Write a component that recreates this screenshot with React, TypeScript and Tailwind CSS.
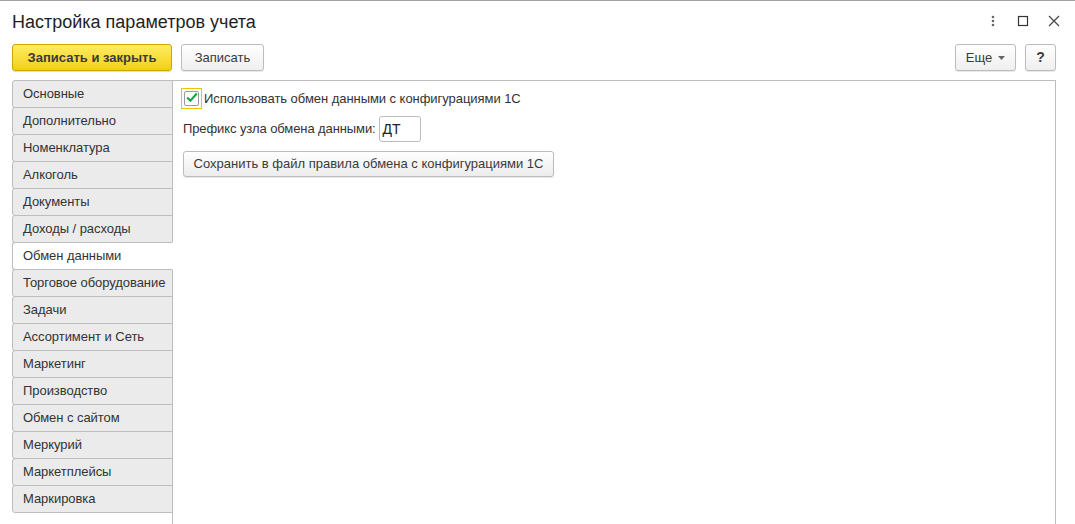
import React from 'react';

const tabs = [
  'Основные',
  'Дополнительно',
  'Номенклатура',
  'Алкоголь',
  'Документы',
  'Доходы / расходы',
  'Обмен данными',
  'Торговое оборудование',
  'Задачи',
  'Ассортимент и Сеть',
  'Маркетинг',
  'Производство',
  'Обмен с сайтом',
  'Меркурий',
  'Маркетплейсы',
  'Маркировка',
];

const active = 'Обмен данными';

const font = { fontFamily: '"Liberation Sans", Arial, sans-serif' };

const App: React.FC = () => {
  return (
    <div className="w-[1075px] h-[524px] bg-white border-t border-[#a3a3a3] overflow-hidden text-[13px] text-[#333]" style={font}>
      {/* window header */}
      <div className="flex items-center h-[39px] pl-3 pr-[14px]">
        <h1 className="text-[18px] text-[#1f1f1f] leading-none pt-[2px]">Настройка параметров учета</h1>
        <div className="ml-auto flex items-center gap-[18px] text-[#444]">
          <svg width="12" height="14" viewBox="0 0 12 14">
            <circle cx="6" cy="3" r="1.3" fill="#666" />
            <circle cx="6" cy="7" r="1.3" fill="#666" />
            <circle cx="6" cy="11" r="1.3" fill="#666" />
          </svg>
          <svg width="12" height="12" viewBox="0 0 12 12">
            <rect x="1.5" y="1.5" width="9" height="9" fill="none" stroke="#333" strokeWidth="1.2" />
          </svg>
          <svg width="14" height="14" viewBox="0 0 14 14">
            <path d="M2 2 L12 12 M12 2 L2 12" stroke="#444" strokeWidth="1.2" />
          </svg>
        </div>
      </div>

      {/* command bar */}
      <div className="flex items-center h-[27px] mt-[4px] pl-3 pr-[19px]">
        <button className="h-[27px] w-[160px] rounded-[3px] border border-[#c9ab00] bg-gradient-to-b from-[#ffec5c] to-[#f4d000] font-bold text-[13px] text-[#3a3a3a] shadow-[0_1px_1px_rgba(0,0,0,0.15)]">
          Записать и закрыть
        </button>
        <button className="ml-[9px] h-[27px] w-[83px] rounded-[3px] border border-[#bcbcbc] bg-gradient-to-b from-white to-[#efefef] text-[13px] text-[#3a3a3a] shadow-[0_1px_1px_rgba(0,0,0,0.1)]">
          Записать
        </button>
        <button className="ml-auto h-[27px] w-[61px] rounded-[3px] border border-[#bcbcbc] bg-gradient-to-b from-white to-[#efefef] text-[13px] text-[#3a3a3a] flex items-center justify-center gap-[6px] shadow-[0_1px_1px_rgba(0,0,0,0.1)]">
          Еще
          <svg width="7" height="4" viewBox="0 0 7 4"><path d="M0 0 H7 L3.5 4 Z" fill="#666" /></svg>
        </button>
        <button className="ml-[9px] h-[27px] w-[31px] rounded-[3px] border border-[#bcbcbc] bg-gradient-to-b from-white to-[#efefef] text-[14px] font-bold text-[#3a3a3a] shadow-[0_1px_1px_rgba(0,0,0,0.1)]">
          ?
        </button>
      </div>

      {/* tabs + page */}
      <div className="flex mt-[9px] pl-3 pr-[19px] h-[460px]">
        <div className="flex flex-col w-[161px] shrink-0">
          {tabs.map((t, i) => {
            const on = t === active;
            return (
              <div
                key={t}
                className={`relative h-[28px] flex items-center pl-[10px] border border-[#bdbdbd] rounded-l-[3px] ${i > 0 ? '-mt-px' : ''} ${
                  on ? 'bg-white border-r-white z-10' : 'bg-[#ebebeb]'
                } text-[13px] text-[#333] whitespace-nowrap tracking-[-0.05px]`}
              >
                {t}
              </div>
            );
          })}
        </div>

        <div className="-ml-px flex-1 border-l border-t border-r border-[#bdbdbd] h-[470px] pl-[8px] pt-[7px]">
          <div className="flex items-center">
            <div className="w-[21px] h-[21px] border border-[#f2c200] flex items-center justify-center">
              <div className="w-[15px] h-[15px] border border-[#9a9a9a] rounded-[2px] bg-white flex items-center justify-center">
                <svg width="15" height="13" viewBox="0 0 15 13" className="-mt-[2px] ml-[1px]">
                  <path d="M1.5 6.5 L5.5 10.5 L13.5 1.5" fill="none" stroke="#19a14a" strokeWidth="2.6" />
                </svg>
              </div>
            </div>
            <span className="ml-[2px] tracking-[-0.05px]">Использовать обмен данными с конфигурациями 1С</span>
          </div>

          <div className="flex items-center mt-[7px] ml-[2px]">
            <span className="tracking-[-0.1px]">Префикс узла обмена данными:</span>
            <div className="ml-[3px] h-[26px] w-[42px] border border-[#bcbcbc] rounded-[3px] flex items-center pl-[3px] text-[14px] text-[#222]">
              ДТ
            </div>
          </div>

          <button className="mt-[9px] ml-[2px] h-[26px] w-[371px] rounded-[3px] border border-[#bcbcbc] bg-gradient-to-b from-white to-[#ececec] text-[13px] text-[#3a3a3a] shadow-[0_1px_1px_rgba(0,0,0,0.1)]">
            Сохранить в файл правила обмена с конфигурациями 1С
          </button>
        </div>
      </div>
    </div>
  );
};

export default App;
